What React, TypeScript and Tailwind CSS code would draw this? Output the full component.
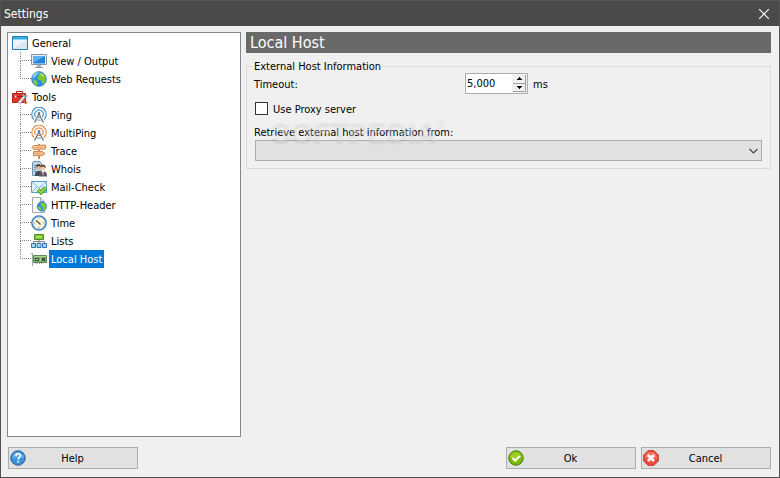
import { useState } from "react"
import type { ReactNode } from "react"

interface TreeEntry {
  label: string
  icon: ReactNode
}

interface TreeGroup extends TreeEntry {
  children: TreeEntry[]
}

function Svg({ children }: { children: ReactNode }) {
  return (
    <svg viewBox="0 0 16 16" className="h-4 w-4 shrink-0" fill="none" aria-hidden="true">
      {children}
    </svg>
  )
}

const WindowIcon = () => (
  <Svg>
    <path d="M.5 1.500h15v13H.5z" fill="#eef4f9" stroke="#2b79b4" />
    <path d="M1 2h14v2H1z" fill="#35b0ea" />
    <path d="M1 4h14v1H1z" fill="#8ad6f8" />
    <path d="M1 14 15 5v9z" fill="#dbe6ef" />
  </Svg>
)

const MonitorIcon = () => (
  <Svg>
    <path d="M.5 1.500h15v10H.5z" fill="#e8edf1" stroke="#8b98a4" />
    <path d="M2 3h12v7.500H2z" fill="#2484dc" />
    <path d="M2 3h12L2 10z" fill="#5fb0f2" />
    <path d="M6 12h4v2H6z" fill="#a8b3bc" />
    <path d="M4 14h8v1H4z" fill="#8b97a1" />
  </Svg>
)

const GlobeIcon = () => (
  <Svg>
    <circle cx="8" cy="8" r="7.300" fill="#2a8fe0" stroke="#3b86c2" />
    <path d="M1.500 5C3 1.500 6 1 8 1.500L6 4 4 6 2 8z" fill="#7cc8f6" />
    <path d="M7.500 2c3-1 6 1 7.200 4 .6 3-.7 6-2.700 7.500-1.500-1-.5-3-2-4S7 9 6.500 7 8 5 8 4z" fill="#7cc62f" />
    <path d="M9 2.500c2-.5 4 1 4.500 3l-3-.5z" fill="#b9e873" />
    <path d="M2 8.500c2 0 4 1 4.500 2.500S6 13.500 6 14.500C4 14 2 12 2 8.500z" fill="#86cb37" />
  </Svg>
)

const ToolboxIcon = () => (
  <Svg>
    <path d="M4.500 4V2.500h6V4" stroke="#a11c14" />
    <path d="M.5 4.500h13v9H.5z" fill="#e0342a" stroke="#b5201a" />
    <path d="M1 7h13v1H1z" fill="#a4140e" />
    <path d="M2.500 6.500h2v2h-2z" fill="#f4d9d5" />
    <path d="m6.500 14.500 6-7" stroke="#8b99a5" strokeWidth="3.200" />
    <path d="m6.500 14.500 6-7" stroke="#e9f0f5" strokeWidth="1.800" />
    <path d="m10.500 5 2 2.500 3-.5" stroke="#94a4b1" strokeWidth="1.800" />
    <path d="m11.500 11 3 3.500" stroke="#e3483a" strokeWidth="2.600" />
  </Svg>
)

function AntennaIcon({ color }: { color: string }) {
  return (
    <Svg>
      <path d="M3 12.500a7.200 7.200 0 1 1 10 0" stroke={color} strokeWidth="1.200" />
      <path d="M4.700 9.800a4.200 4.200 0 1 1 6.600 0" stroke={color} strokeWidth="1.200" />
      <path d="M8 7 3.500 15.500M8 7l4.500 8.500" stroke="#6d747b" strokeWidth="1.300" />
      <path d="M6.500 10.500h3M5.500 13l5 .1" stroke="#8b9197" />
      <circle cx="8" cy="6.500" r="1.400" fill="#777e85" />
    </Svg>
  )
}

const SignpostIcon = () => (
  <Svg>
    <path d="M7 1h2v15H7z" fill="#c98d59" />
    <path d="M3 2.500 14.500 2v4L3 6.500l-2.300-2z" fill="#f8c797" stroke="#d08a52" />
    <path d="M2.500 8.500H11l3 2-3 2H2.500z" fill="#f4bd8a" stroke="#d08a52" />
    <path d="M4 4.500h8M4 10.500h6" stroke="#e3a472" />
  </Svg>
)

const WhoisIcon = () => (
  <Svg>
    <path d="M1.500 1.500 3 .5h6l1.500 2v12h-9z" fill="#c0d8eb" stroke="#6b90b0" />
    <path d="M3 4.500h4M3 6.500h2M3 8.500h2M3 10.500h2" stroke="#6389a9" />
    <circle cx="7.500" cy="6.500" r="2.300" fill="#ddb38d" />
    <path d="M5 6c0-4 5-4 5 0L8 5z" fill="#533c2d" />
    <path d="M4 15c0-4 1-5 4-5s3 2 3 5z" fill="#454b52" />
    <circle cx="12" cy="7" r="2.400" fill="#f2c9a0" />
    <path d="M9.500 6.500c0-4 5.500-4 5.200.5L12 5.500z" fill="#6d4b32" />
    <path d="M8 15.500c0-4 1.500-5.500 4-5.500s4 1.500 4 5.500z" fill="#535a61" />
    <path d="m10.500 10 1.500 5 1.500-5z" fill="#fff" />
    <path d="M12 11v3" stroke="#b83b2f" />
  </Svg>
)

const MailIcon = () => (
  <Svg>
    <path d="M.5 2.500h15v11H.5z" fill="#e3f3fd" stroke="#5c9cca" />
    <path d="m1 3 7 6 7-6M1 13l5-5M15 13l-5-5" stroke="#7fb8de" />
    <path d="m7 10.500 3 3 5-5" stroke="#3f8f1d" strokeWidth="3.800" />
    <path d="m7 10.500 3 3 5-5" stroke="#8ad841" strokeWidth="2.200" />
  </Svg>
)

const PageGlobeIcon = () => (
  <Svg>
    <path d="M1.500.5h8l4 4v11h-12z" fill="#f7f8f9" stroke="#a4abb2" />
    <path d="M9.500.5v4h4" fill="#dce1e5" stroke="#a4abb2" />
    <circle cx="11" cy="9.500" r="4.600" fill="#2c8fd8" stroke="#3380bb" />
    <path d="M10.500 5.500c3 0 4.500 1 5 4s-2 4-3 4c-1-2 0-3-1.500-4s-2-2-.5-4z" fill="#7fc936" />
    <path d="M7 9.500c2 0 3.500 1 3.500 4-2-.5-3.500-2-3.500-4z" fill="#8ad03f" />
  </Svg>
)

const ClockIcon = () => (
  <Svg>
    <circle cx="8" cy="8" r="7.100" fill="#fdf3d0" stroke="#3a7ebb" strokeWidth="1.500" />
    <circle cx="8" cy="8" r="5.800" stroke="#b3d5ee" />
    <path d="M8 3v1M8 12v1M3 8h1M12 8h1" stroke="#b5a679" />
    <path d="M5 5.500 8 8l1.500 1.500" stroke="#4d4d45" strokeWidth="1.200" />
  </Svg>
)

const ListsIcon = () => (
  <Svg>
    <path d="M8 6v3M2.500 11V8.500h11V11M8 8v3" stroke="#7b858d" />
    <path d="M3.500 1.500h9v5h-9z" fill="#79c23a" stroke="#4d9324" />
    <path d="M5 3h6v2H5z" fill="#a8e05e" />
    <path d="M.5 10.500h4v4h-4zM6 10.500h4v4H6zM11.500 10.500h4v4h-4z" fill="#a5d5f5" stroke="#2f74ad" />
  </Svg>
)

const CardIcon = () => (
  <Svg>
    <path d="M1.500 2v13M0 2.500h2" stroke="#a3aaae" />
    <path d="M2.500 4.500h13v7h-13z" fill="#7fae67" stroke="#5c8c55" />
    <path d="M3 5h12v1H3z" fill="#add492" />
    <path d="M4 7h4v3H4zM11 7h3v3h-3z" fill="#3f5645" />
    <path d="M5 8h2v1H5zM9 7h1v3H9z" fill="#bdc9bb" />
    <path d="M4 12.500h7" stroke="#c8a44c" strokeDasharray="1 1" />
  </Svg>
)

const HelpIcon = () => (
  <Svg>
    <circle cx="8" cy="8" r="7.200" fill="#3f92d9" stroke="#1d5b9c" />
    <path d="M2 8a6 6 0 0 1 12 0z" fill="#66aee8" />
    <path d="M5.900 6c0-2.800 4.400-2.800 4.400-.3 0 2-2.200 1.800-2.200 3.800M8.100 10.800v1.600" stroke="#fff" strokeWidth="1.500" />
  </Svg>
)

const OkIcon = () => (
  <Svg>
    <circle cx="8" cy="8" r="7.200" fill="#79b900" stroke="#487d05" />
    <path d="M2 8a6 6 0 0 1 12 0z" fill="#9bcf24" />
    <path d="m4.500 8 2.700 2.700 4.500-4.700" stroke="#fff" strokeWidth="2.200" />
  </Svg>
)

const CancelIcon = () => (
  <Svg>
    <path d="M5 .7h6L15.300 5v6L11 15.300H5L.7 11V5z" fill="#ed4b3c" stroke="#c2372c" />
    <path d="M5.300 2h5.400L14 5.500V8H2V5.500z" fill="#f57566" />
    <path d="m5 5 6 6M11 5l-6 6" stroke="#fff" strokeWidth="2.600" />
  </Svg>
)

const groups: TreeGroup[] = [
  {
    label: "General",
    icon: <WindowIcon />,
    children: [
      { label: "View / Output", icon: <MonitorIcon /> },
      { label: "Web Requests", icon: <GlobeIcon /> },
    ],
  },
  {
    label: "Tools",
    icon: <ToolboxIcon />,
    children: [
      { label: "Ping", icon: <AntennaIcon color="#4b92c8" /> },
      { label: "MultiPing", icon: <AntennaIcon color="#e0934f" /> },
      { label: "Trace", icon: <SignpostIcon /> },
      { label: "Whois", icon: <WhoisIcon /> },
      { label: "Mail-Check", icon: <MailIcon /> },
      { label: "HTTP-Header", icon: <PageGlobeIcon /> },
      { label: "Time", icon: <ClockIcon /> },
      { label: "Lists", icon: <ListsIcon /> },
      { label: "Local Host", icon: <CardIcon /> },
    ],
  },
]

function TreeLabel({ label, selected, onSelect }: { label: string; selected: boolean; onSelect: () => void }) {
  return (
    <button
      type="button"
      onClick={onSelect}
      className={`ml-0.5 h-[18px] px-0.5 pt-0.5 leading-4 whitespace-nowrap ${selected ? "bg-[#0078d7] text-white" : ""}`}
    >
      {label}
    </button>
  )
}

function SettingsTree({ selected, onSelect }: { selected: string; onSelect: (label: string) => void }) {
  return (
    <nav className="w-[234px] shrink-0 border border-[#828790] bg-white py-px pl-1">
      <ul>
        {groups.map((group) => (
          <li key={group.label}>
            <div className="flex h-[18px] items-center">
              {group.icon}
              <TreeLabel
                label={group.label}
                selected={selected === group.label}
                onSelect={() => onSelect(group.label)}
              />
            </div>
            <ul className="pl-2">
              {group.children.map((item, index) => (
                <li key={item.label} className="flex h-[18px] items-center">
                  <span className="flex h-full w-[11px] flex-col">
                    <span className="h-[9px] border-b border-l border-dotted border-[#808080]" />
                    {index < group.children.length - 1 && (
                      <span className="h-[9px] border-l border-dotted border-[#808080]" />
                    )}
                  </span>
                  {item.icon}
                  <TreeLabel
                    label={item.label}
                    selected={selected === item.label}
                    onSelect={() => onSelect(item.label)}
                  />
                </li>
              ))}
            </ul>
          </li>
        ))}
      </ul>
    </nav>
  )
}

function DialogButton({ label, icon }: { label: string; icon: ReactNode }) {
  return (
    <button
      type="button"
      className="grid h-[22px] w-[130px] grid-cols-[16px_1fr_18px] items-center border border-[#adadad] bg-[#e1e1e1] pl-px"
    >
      {icon}
      <span className="pt-0.5">{label}</span>
    </button>
  )
}

function HostForm() {
  const [timeout, setTimeout] = useState(5000)
  const [proxy, setProxy] = useState(false)

  return (
    <fieldset className="relative mt-1.5 min-w-0 border border-[#dcdcdc] px-[7px] pb-[7px]">
      <legend className="-ml-0.5 h-[14px] px-0.5 leading-4">External Host Information</legend>
      <div className="flex h-[21px] items-center">
        <label htmlFor="timeout" className="w-[211px] pt-0.5">
          Timeout:
        </label>
        <div className="flex h-[21px] w-[63px] border border-[#abadb3] bg-white">
          <input
            id="timeout"
            type="text"
            inputMode="numeric"
            value={timeout.toLocaleString("en-US")}
            onChange={(e) => setTimeout(Number(e.target.value.replace(/\D/g, "")))}
            className="w-[46px] min-w-0 pl-px outline-none"
          />
          <div className="flex flex-1 flex-col bg-[#f0f0f0] p-px">
            <button
              type="button"
              aria-label="Increase"
              onClick={() => setTimeout(timeout + 100)}
              className="flex flex-1 items-center justify-center border-r border-b border-[#a0a0a0]"
            >
              <svg viewBox="0 0 5 3" className="h-[3px] w-[5px]">
                <path d="M2 0h1v1h1v1h1v1H0V2h1V1h1z" />
              </svg>
            </button>
            <button
              type="button"
              aria-label="Decrease"
              onClick={() => setTimeout(Math.max(0, timeout - 100))}
              className="flex flex-1 items-center justify-center border-r border-b border-[#a0a0a0]"
            >
              <svg viewBox="0 0 5 3" className="h-[3px] w-[5px]">
                <path d="M0 0h5v1H4v1H3v1H2V2H1V1H0z" />
              </svg>
            </button>
          </div>
        </div>
        <span className="ml-[5px] pt-0.5">ms</span>
      </div>
      <label className="mt-2 flex h-[13px] items-center gap-[5px] pl-px">
        <input
          type="checkbox"
          checked={proxy}
          onChange={(e) => setProxy(e.target.checked)}
          className="h-[13px] w-[13px] appearance-none border border-[#333] bg-white checked:bg-[#0078d7]"
        />
        <span className="pt-0.5">Use Proxy server</span>
      </label>
      <label htmlFor="source" className="mt-2 block h-[17px] leading-5">
        Retrieve external host information from:
      </label>
      <div className="mx-px grid items-center">
        <select
          id="source"
          className="col-start-1 row-start-1 h-[21px] w-full appearance-none border border-[#adadad] bg-[#e1e1e1]"
        />
        <svg
          viewBox="0 0 9 6"
          className="pointer-events-none col-start-1 row-start-1 mr-1 h-1.5 w-[9px] justify-self-end"
          fill="none"
          aria-hidden="true"
        >
          <path d="m.5 1 4 4 4-4" stroke="#444" strokeWidth="1.200" />
        </svg>
      </div>
      <div className="pointer-events-none absolute top-11 left-6 flex items-start font-['Liberation_Sans',sans-serif] text-[29px] leading-[29px] font-bold text-white/30 [-webkit-text-stroke:1px_rgb(255_255_255/0.15)] [text-shadow:0_2px_3px_rgb(0_0_0/0.1)]">
        SOFTPEDIA<span className="text-[11px] leading-[11px]">®</span>
      </div>
    </fieldset>
  )
}

export default function App() {
  const [selected, setSelected] = useState("Local Host")

  return (
    <div className="flex min-h-screen flex-col border border-[#555352] bg-[#f0f0f0] font-['DejaVu_Sans_Condensed','Noto_Sans',sans-serif] text-[11px] leading-[18px] text-black">
      <header className="flex h-[25px] items-center justify-between bg-[#4c4a48] pr-2.5 pl-[3px] text-white">
        <h1 className="text-xs">Settings</h1>
        <button type="button" aria-label="Close">
          <svg viewBox="0 0 10 10" className="h-2.5 w-2.5" fill="none">
            <path d="m0 0 10 10M10 0 0 10" stroke="#fff" strokeWidth="1.200" />
          </svg>
        </button>
      </header>
      <main className="flex flex-1 gap-[5px] pt-1.5 pr-2 pl-1.5">
        <SettingsTree selected={selected} onSelect={setSelected} />
        <section className="min-w-0 flex-1">
          <h2 className="h-[21px] bg-[#696969] pl-1 text-base leading-[21px] text-white">{selected}</h2>
          <HostForm />
        </section>
      </main>
      <footer className="flex gap-[5px] pt-2.5 pr-2 pb-2 pl-[7px]">
        <div className="flex-1">
          <DialogButton label="Help" icon={<HelpIcon />} />
        </div>
        <DialogButton label="Ok" icon={<OkIcon />} />
        <DialogButton label="Cancel" icon={<CancelIcon />} />
      </footer>
    </div>
  )
}
